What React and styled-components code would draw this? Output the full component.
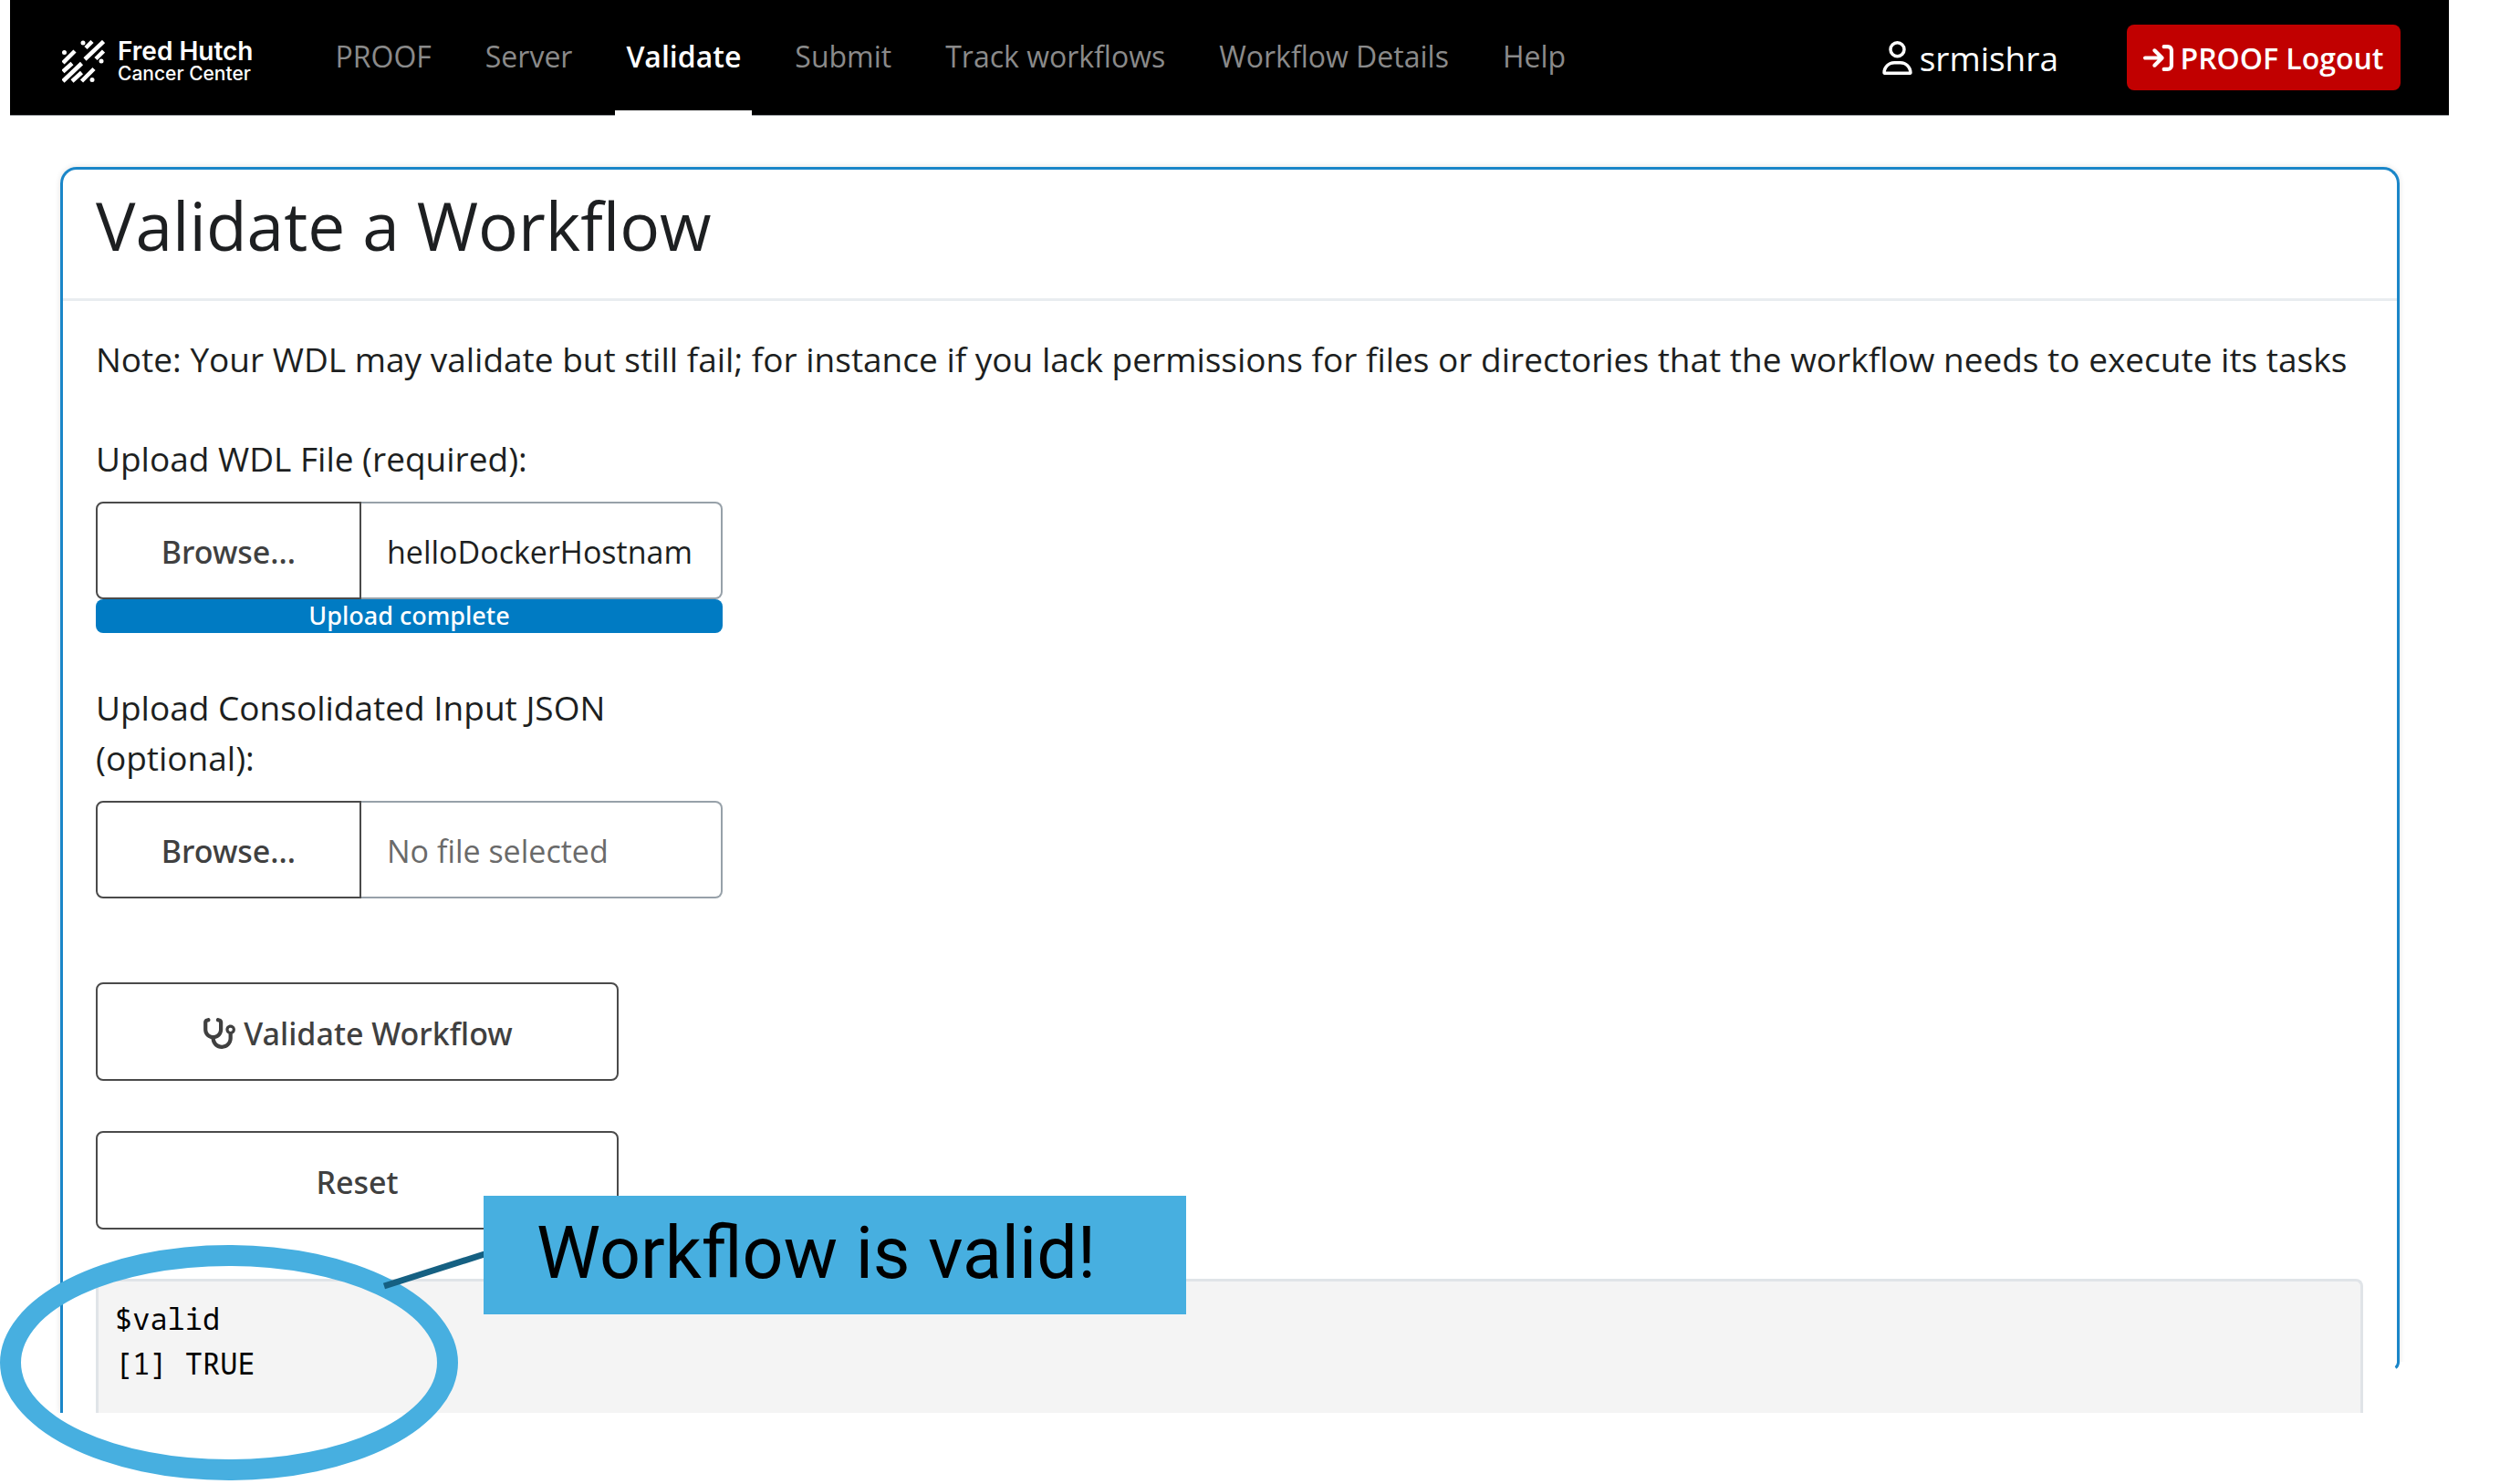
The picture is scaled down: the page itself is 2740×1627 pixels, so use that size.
import React from 'react';
import styled, { createGlobalStyle, css } from 'styled-components';
import { FaArrowRightToBracket, FaRegUser, FaStethoscope } from 'react-icons/fa6';

const GlobalStyle = createGlobalStyle`
  *, *::before, *::after { box-sizing: border-box; }
  body {
    margin: 0;
    background: #fff;
    color: #1d1f21;
    font-family: "Open Sans", "Noto Sans", sans-serif;
    font-size: 37px;
    line-height: 55px;
  }
`;

const Page = styled.div`
  position: relative;
  min-height: 100vh;
  padding: 0 56px 78px 11px;
`;

const Header = styled.header`
  display: flex;
  align-items: center;
  height: 127px;
  padding: 0 53px 0 57px;
  background: #000;
  border-bottom: 1px solid #9a9fa3;
`;

const Brand = styled.a`
  display: flex;
  align-items: center;
  gap: 14px;
  padding-top: 9px;
  color: #fff;
  text-decoration: none;
`;

const BrandText = styled.span`
  display: flex;
  flex-direction: column;
  font-family: Inter, sans-serif;
`;

const BrandName = styled.span`
  font-size: 28px;
  font-weight: 600;
  line-height: 26px;
`;

const BrandSub = styled.span`
  font-size: 21px;
  font-weight: 500;
  line-height: 24px;
`;

const Nav = styled.nav`
  display: flex;
  flex: 1;
  gap: 35px;
  margin-left: 78px;
`;

const NavLink = styled.a`
  padding: 39px 12px 37px;
  border-bottom: 6px solid transparent;
  color: #8a8a8a;
  font-size: 32px;
  line-height: 45px;
  text-decoration: none;
  white-space: nowrap;
  ${(p) => p.$active && css`
    border-bottom-color: #fff;
    color: #fff;
    font-weight: 600;
  `}
`;

const User = styled.span`
  display: flex;
  align-items: center;
  gap: 8px;
  margin-right: 75px;
  color: #fff;
  svg { width: 33px; height: 37px; }
`;

const LogoutButton = styled.button`
  display: flex;
  align-items: center;
  justify-content: center;
  gap: 7px;
  width: 300px;
  height: 72px;
  padding: 0;
  border: 0;
  border-radius: 8px;
  background: #c10000;
  color: #fff;
  font: 600 32px/45px "Open Sans", sans-serif;
  white-space: nowrap;
  svg { width: 33px; height: 33px; }
`;

const Main = styled.main`
  padding: 56px 54px 0 55px;
`;

const Card = styled.section`
  position: relative;
  border: 3px solid #1a86c8;
  border-bottom: 0;
  border-radius: 18px 18px 0 0;
  box-shadow: 0 0 6px rgba(0, 0, 0, 0.12);
  clip-path: inset(-8px -8px 0 -8px);
`;

const CardEdge = styled.svg`
  position: absolute;
  right: -11px;
  bottom: 0;
  width: 16px;
  height: 56px;
`;

const CardHeader = styled.div`
  padding: 17px 36px 36px;
  border-bottom: 3px solid #e9edf0;
`;

const Title = styled.h1`
  margin: 0;
  font-size: 73px;
  font-weight: 400;
  line-height: 88px;
`;

const CardBody = styled.div`
  display: flex;
  flex-direction: column;
  align-items: flex-start;
  gap: 54px;
  padding: 36px 37px 0 36px;
`;

const Note = styled.p`
  margin: 0;
`;

const Field = styled.div`
  display: flex;
  flex-direction: column;
  width: 687px;
`;

const FieldLabel = styled.label`
  margin-bottom: 20px;
`;

const FileRow = styled.div`
  display: flex;
  height: 107px;
`;

const buttonText = css`
  padding: 4px 0 0;
  color: #404040;
  font: 500 34px/51px "Noto Sans", "Open Sans", sans-serif;
`;

const Browse = styled.label`
  ${buttonText}
  display: flex;
  flex: 0 0 291px;
  align-items: center;
  justify-content: center;
  border: 2px solid #4a4a4a;
  border-radius: 8px 0 0 8px;
`;

const HiddenFile = styled.input`
  position: absolute;
  width: 1px;
  height: 1px;
  opacity: 0;
`;

const FileName = styled.input`
  flex: 1;
  min-width: 0;
  padding: 4px 28px 0;
  border: 2px solid #97a1a9;
  border-left: 0;
  border-radius: 0 8px 8px 0;
  background: #fff;
  color: #1d1f21;
  font: 400 34px/51px "Open Sans", "Noto Sans", sans-serif;
  &::placeholder { color: #6a6a6a; opacity: 1; }
`;

const Progress = styled.div`
  height: 37px;
  border-radius: 8px;
  background: #007bc3;
  color: #fff;
  font: 500 27px/36px "Noto Sans", "Open Sans", sans-serif;
  text-align: center;
`;

const Actions = styled.div`
  display: flex;
  flex-direction: column;
  gap: 55px;
  width: 573px;
  padding-top: 38px;
`;

const ActionButton = styled.button`
  ${buttonText}
  display: flex;
  align-items: center;
  justify-content: center;
  gap: 8px;
  height: 108px;
  border: 2px solid #4a4a4a;
  border-radius: 8px;
  background: #fff;
  svg { width: 38px; height: 34px; }
`;

const Output = styled.pre`
  align-self: stretch;
  height: 147px;
  margin: 0;
  padding: 16px 18px;
  border: 3px solid #e0e4e8;
  border-bottom: 0;
  border-radius: 8px 8px 0 0;
  background: #f4f4f4;
  color: #000;
  font: 32px/49px "Noto Sans Mono", "DejaVu Sans Mono", monospace;
`;

const Ring = styled.div`
  position: absolute;
  top: 1365px;
  left: 0;
  width: 502px;
  height: 258px;
  border: 23px solid #47afe0;
  border-radius: 50%;
`;

const Pointer = styled.svg`
  position: absolute;
  top: 1365px;
  left: 410px;
  width: 130px;
  height: 60px;
`;

const Callout = styled.div`
  position: absolute;
  top: 1311px;
  left: 530px;
  width: 770px;
  padding: 16px 58px 20px;
  background: #47afe0;
  color: #000;
  font-family: Roboto, sans-serif;
  font-size: 79px;
  line-height: 94px;
  white-space: nowrap;
`;

const NAV = ['PROOF', 'Server', 'Validate', 'Submit', 'Track workflows', 'Workflow Details', 'Help'];

function LogoMark() {
  return (
    <svg width="47" height="47" viewBox="68 44 47 47" aria-hidden="true">
      <g stroke="#fff" strokeWidth="4.500" fill="none">
        <path d="M82 56 69 69M101 45.500 94 52.500M113.500 45.500 93 65M113.500 56 105 64.500" />
        <path d="M79 69.500 69 78.500M89.500 69.500 69 89M89.500 79.500 79 89M103 75.500 89.500 89" />
      </g>
      <g fill="#fff">
        <circle cx="70.500" cy="57.500" r="2.500" />
        <circle cx="91" cy="47" r="2.500" />
        <circle cx="111" cy="67" r="2.500" />
        <circle cx="101" cy="87.500" r="2.500" />
      </g>
    </svg>
  );
}

function FileField({ id, label, fileName, done }) {
  return (
    <Field>
      <FieldLabel htmlFor={`${id}-name`}>{label}</FieldLabel>
      <FileRow>
        <Browse>
          Browse...
          <HiddenFile type="file" />
        </Browse>
        <FileName id={`${id}-name`} type="text" readOnly value={fileName} placeholder="No file selected" />
      </FileRow>
      {done && <Progress>Upload complete</Progress>}
    </Field>
  );
}

export default function App() {
  return (
    <>
      <GlobalStyle />
      <Page>
        <Header>
          <Brand href="#">
            <LogoMark />
            <BrandText>
              <BrandName>Fred Hutch</BrandName>
              <BrandSub>Cancer Center</BrandSub>
            </BrandText>
          </Brand>
          <Nav>
            {NAV.map((name) => (
              <NavLink key={name} href="#" $active={name === 'Validate'}>{name}</NavLink>
            ))}
          </Nav>
          <User><FaRegUser />srmishra</User>
          <LogoutButton type="button"><FaArrowRightToBracket />PROOF Logout</LogoutButton>
        </Header>
        <Main>
          <Card>
            <CardHeader><Title>Validate a Workflow</Title></CardHeader>
            <CardBody>
              <Note>
                Note: Your WDL may validate but still fail; for instance if you lack permissions for
                files or directories that the workflow needs to execute its tasks
              </Note>
              <FileField id="wdl" label="Upload WDL File (required):" fileName="helloDockerHostnam" done />
              <FileField id="json" label="Upload Consolidated Input JSON (optional):" fileName="" />
              <Actions>
                <ActionButton type="button"><FaStethoscope />Validate Workflow</ActionButton>
                <ActionButton type="button">Reset</ActionButton>
              </Actions>
              <Output>{'$valid\n[1] TRUE'}</Output>
            </CardBody>
            <CardEdge viewBox="0 0 16 56" aria-hidden="true">
              <path d="M3 0h13v56H0V4h3z" fill="#fff" />
              <path d="M6.500 0v1Q6 5 3.500 6.500" fill="none" stroke="#1a86c8" strokeWidth="3" />
            </CardEdge>
          </Card>
        </Main>
        <Ring />
        <Pointer viewBox="0 0 130 60" aria-hidden="true">
          <path d="M11 45 121 10" stroke="#156082" strokeWidth="7" />
        </Pointer>
        <Callout>Workflow is valid!</Callout>
      </Page>
    </>
  );
}
